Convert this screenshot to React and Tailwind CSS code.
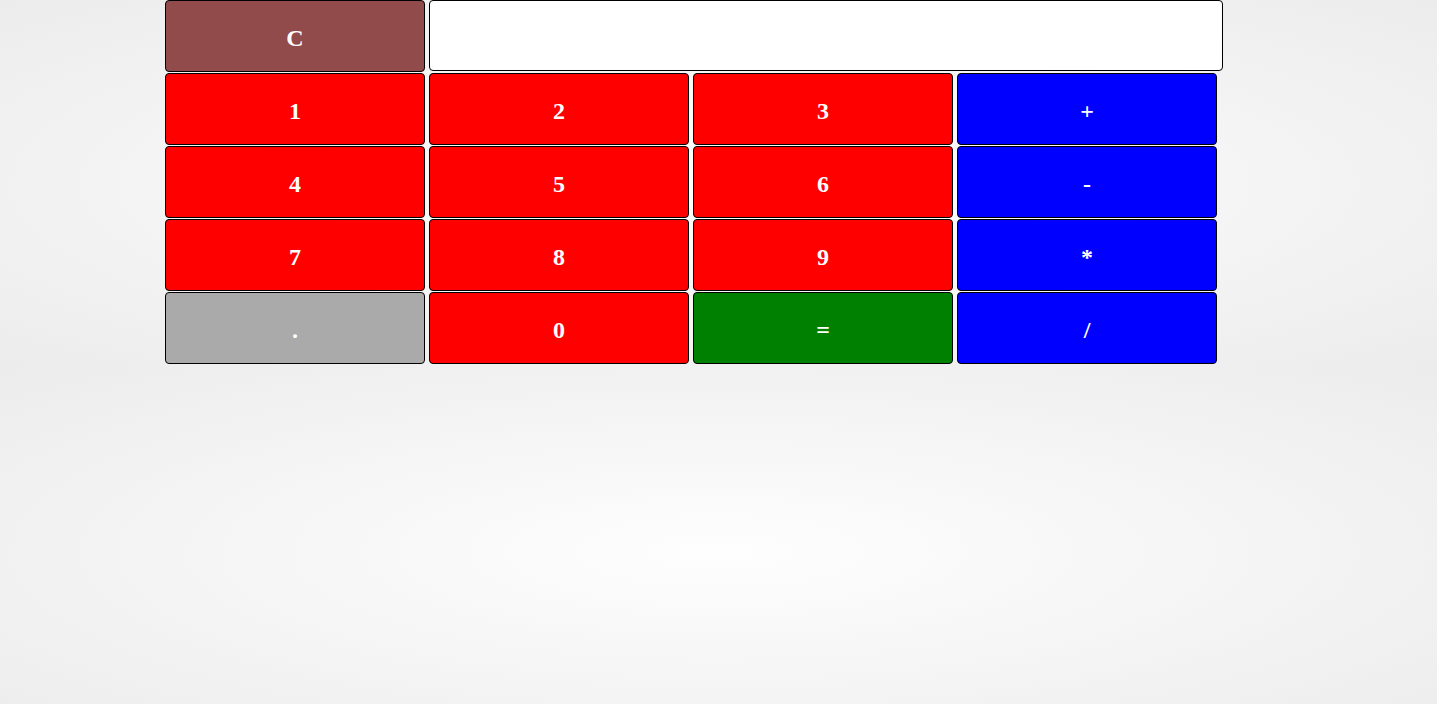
import React, { useState } from 'react';

const keys = [
  { label: '1', cls: 'bg-[#ff0000]' },
  { label: '2', cls: 'bg-[#ff0000]' },
  { label: '3', cls: 'bg-[#ff0000]' },
  { label: '+', cls: 'bg-[#0000ff]' },
  { label: '4', cls: 'bg-[#ff0000]' },
  { label: '5', cls: 'bg-[#ff0000]' },
  { label: '6', cls: 'bg-[#ff0000]' },
  { label: '-', cls: 'bg-[#0000ff]' },
  { label: '7', cls: 'bg-[#ff0000]' },
  { label: '8', cls: 'bg-[#ff0000]' },
  { label: '9', cls: 'bg-[#ff0000]' },
  { label: '*', cls: 'bg-[#0000ff]' },
  { label: '.', cls: 'bg-[#aaaaaa]' },
  { label: '0', cls: 'bg-[#ff0000]' },
  { label: '=', cls: 'bg-[#008000]' },
  { label: '/', cls: 'bg-[#0000ff]' },
];

const Key = ({ label, cls, onClick }) => (
  <button
    onClick={onClick}
    className={`w-[260px] h-[72px] pt-[4px] border border-black rounded-[4px] text-white font-bold text-[24px] leading-none flex items-center justify-center ${cls}`}
  >
    {label}
  </button>
);

const App = () => {
  const [display, setDisplay] = useState('');

  const press = (label) => {
    if (label === '=') {
      try {
        // eslint-disable-next-line no-eval
        setDisplay(String(eval(display)));
      } catch (e) {
        setDisplay('Error');
      }
      return;
    }
    setDisplay(display + label);
  };

  return (
    <div
      className="h-screen w-full bg-[radial-gradient(ellipse_at_center,#fefefe_0%,#ececec_100%)] bg-[length:100%_368px] bg-repeat"
      style={{ fontFamily: '"Liberation Serif", "Times New Roman", serif' }}
    >
      <div className="ml-[165px] flex flex-col gap-y-px">
        {/* top row: clear + display */}
        <div className="flex gap-x-[4px]">
          <Key label="C" cls="bg-[#924b4b]" onClick={() => setDisplay('')} />
          <input
            readOnly
            value={display}
            className="w-[794px] h-[71px] border border-black rounded-[4px] bg-white px-2 text-right text-[24px] outline-none"
          />
        </div>

        {/* keypad */}
        <div className="grid grid-cols-[repeat(4,260px)] gap-x-[4px] gap-y-px">
          {keys.map((k) => (
            <Key key={k.label} label={k.label} cls={k.cls} onClick={() => press(k.label)} />
          ))}
        </div>
      </div>
    </div>
  );
};

export default App;
